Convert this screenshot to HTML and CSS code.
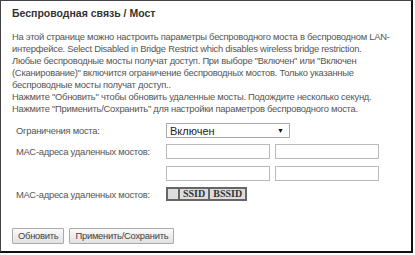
FILE: index.html
```html
<!DOCTYPE html>
<html>
<head>
<meta charset="utf-8">
<link rel="stylesheet" href="styles.css">
</head>
<body>
<div class="frame">
  <div class="title">Беспроводная связь / Мост</div>
  <div class="desc">На этой странице можно настроить параметры беспроводного моста в беспроводном LAN-<br>интерфейсе. Select Disabled in Bridge Restrict which disables wireless bridge restriction.<br>Любые беспроводные мосты получат доступ. При выборе "Включен" или "Включен<br>(Сканирование)" включится ограничение беспроводных мостов. Только указанные<br>беспроводные мосты получат доступ..<br>Нажмите "Обновить" чтобы обновить удаленные мосты. Подождите несколько секунд.<br>Нажмите "Применить/Сохранить" для настройки параметров беспроводного моста.</div>
  <div class="form">
    <div class="label row1">Ограничения моста:</div>
    <div class="select row1"><span>Включен</span><span class="arrow">▼</span></div>
    <div class="label row2">МАС-адреса удаленных мостов:</div>
    <div class="inputs">
      <div class="input"></div><div class="input"></div>
      <div class="input"></div><div class="input"></div>
    </div>
    <div class="label row3">МАС-адреса удаленных мостов:</div>
    <table class="scan">
      <tr><td class="blank"></td><td>SSID</td><td>BSSID</td></tr>
    </table>
  </div>
  <div class="buttons">
    <div class="btn">Обновить</div>
    <div class="btn">Применить/Сохранить</div>
  </div>
</div>
</body>
</html>
```
FILE: styles.css
```css
html, body { margin: 0; padding: 0; background: #fff; }
body { font-family: "Liberation Sans", Arial, sans-serif; font-size: 9.4px; letter-spacing: -0.25px; color: #555; }
.frame {
  width: 413px; height: 253px; box-sizing: border-box; overflow: hidden;
  border-top: 1px solid #444; border-left: 1px solid #444;
  border-right: 2px solid #111; border-bottom: 2px solid #111;
  padding: 6px 6px 0 11px;
}
.title { font-weight: bold; color: #333; font-size: 10.5px; letter-spacing: 0; line-height: 13px; }
.desc { margin-top: 11px; line-height: 12px; white-space: nowrap; }
.form {
  display: grid; grid-template-columns: 150px auto; margin-top: 2px; padding-left: 4px;
  justify-items: start;
}
.label { align-self: center; white-space: nowrap; }
.select {
  width: 124px; height: 15px; box-sizing: border-box; border: 1px solid #aaa;
  display: flex; justify-content: space-between; align-items: center; padding: 0 5px 0 3px;
  font-size: 11px; letter-spacing: 0; color: #222;
}
.row1 { margin-top: 6px; }
.arrow { font-size: 7px; color: #111; }
.inputs { display: grid; grid-template-columns: 104px 104px; column-gap: 5px; row-gap: 7px; margin-top: 6px; }
.input { height: 15px; box-sizing: border-box; border: 1px solid #bbb; }
.row2 { align-self: start; margin-top: 8px; }
.row3 { margin-top: 6px; }
.scan { border-collapse: collapse; margin-top: 6px; font-family: "Liberation Serif", serif; font-weight: bold; font-size: 10px; letter-spacing: 0; color: #333; }
.scan td { background: #ddd; border: 2px solid #666; padding: 0 3px; height: 10px; line-height: 10px; }
.scan td.blank { width: 6px; padding: 0 2px; }
.buttons { display: flex; gap: 5px; margin-top: 27px; }
.btn {
  height: 16px; box-sizing: border-box; border: 1px solid #aaa; border-radius: 1px;
  background: linear-gradient(#fafafa, #e2e2e2); padding: 0 5px; line-height: 14px; color: #444;
}
```
